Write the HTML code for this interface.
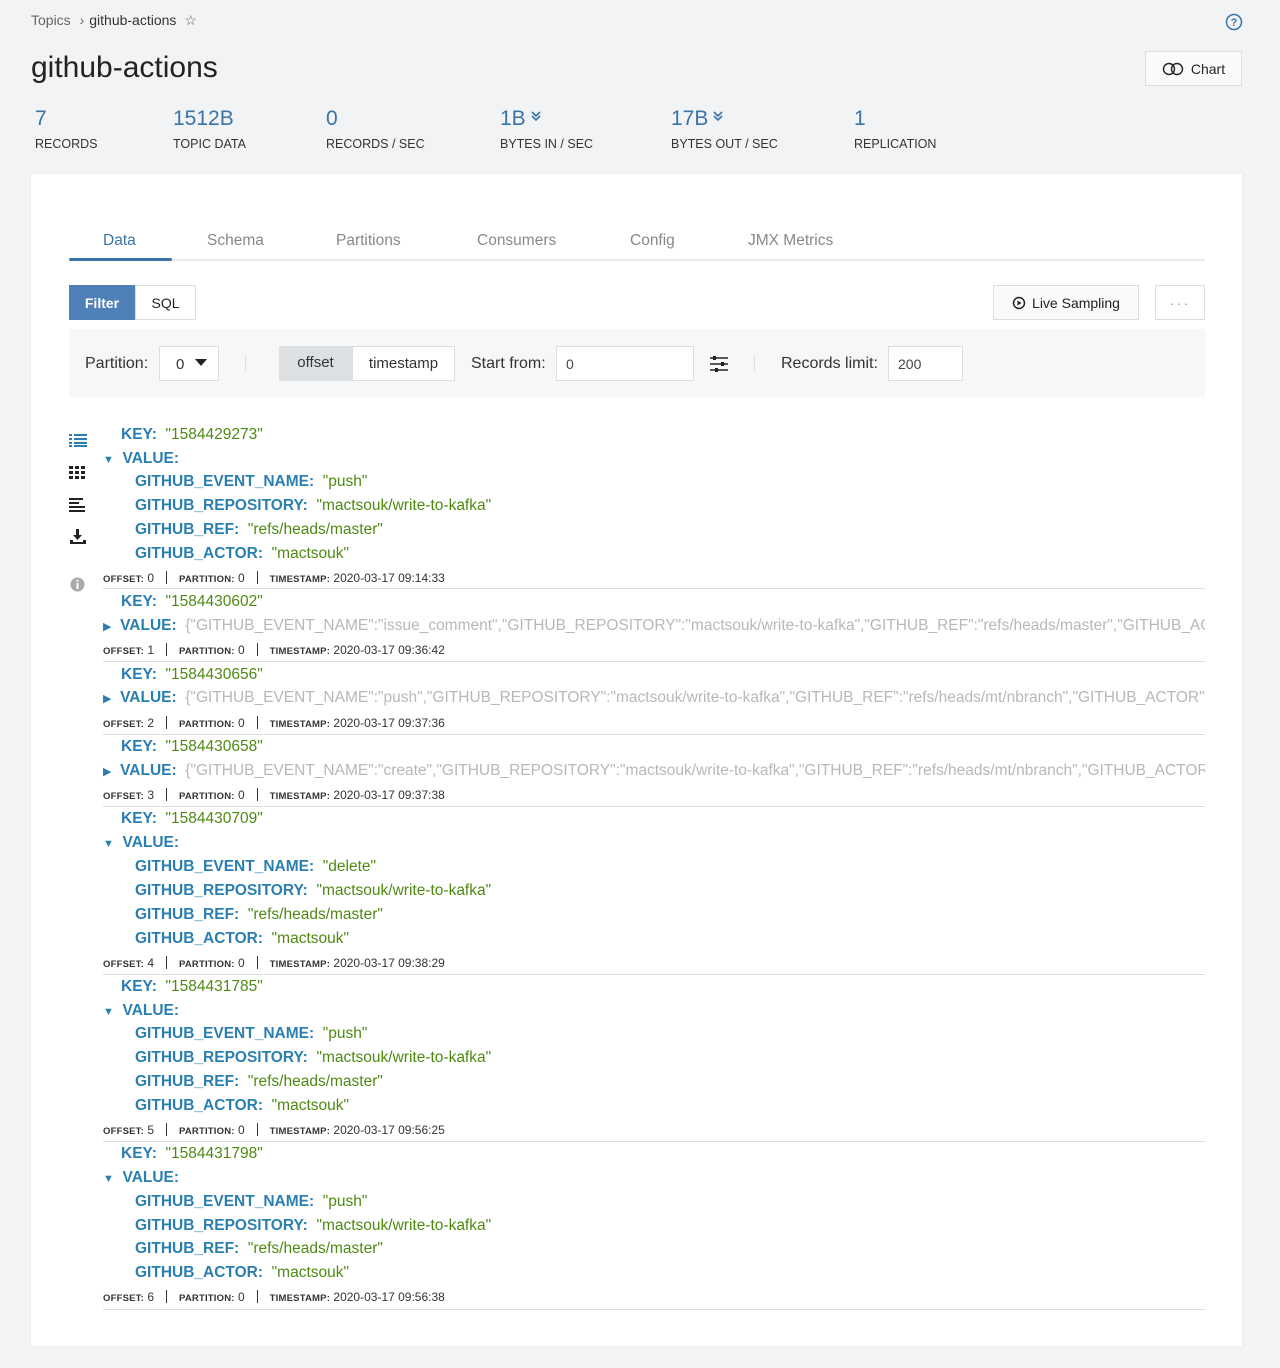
<!DOCTYPE html>
<html><head><meta charset="utf-8"><style>
*{margin:0;padding:0;box-sizing:border-box}
body{width:1280px;height:1368px;background:#f2f3f5;font-family:"Liberation Sans",sans-serif;position:relative;overflow:hidden;color:#222}
.a{position:absolute;white-space:nowrap}
.card{position:absolute;left:31px;top:174px;width:1211px;height:1172px;background:#fff;box-shadow:0 0 2px rgba(0,0,0,.08)}
.stat .n{font-size:21px;color:#3a73a8}
.stat .t{font-size:12.5px;color:#333;margin-top:6px}
.tab{font-size:15.5px;color:#888;top:232px}
.l{position:absolute;white-space:nowrap;font-size:15.5px;line-height:22px;height:22px}
.k{color:#2a7fb0;font-weight:bold}
.v{color:#4e8a12}
.g{color:#b8b8b8}
.m{position:absolute;font-size:12px;color:#333;white-space:nowrap;line-height:14px}
.m b{font-size:9.5px;font-weight:bold;letter-spacing:.2px}
.m i{font-style:normal;display:inline-block;width:1px;height:13px;background:#333;vertical-align:-2px;margin:0 12px}
.hr{position:absolute;left:103px;width:1102px;height:1px;background:#ddd}
.arr{color:#2a7fb0;font-size:11px}
.btn{position:absolute;border:1px solid #ddd;background:#fafafa;font-size:14px;color:#222;display:flex;align-items:center;justify-content:center}
.chev{display:inline-block;vertical-align:3px;margin-left:4px}
</style></head><body>
<div class="a" style="left:31px;top:12px;font-size:14px;color:#666">Topics <span style="margin:0 5px">›</span><span style="color:#333">github-actions</span> <span style="font-size:14px;margin-left:4px">☆</span></div>
<svg class="a" style="left:1225px;top:13px" width="18" height="18" viewBox="0 0 18 18"><circle cx="9" cy="9" r="7.5" fill="none" stroke="#3a73a8" stroke-width="1.5"/><text x="9" y="13" text-anchor="middle" font-size="11" font-weight="bold" fill="#3a73a8" font-family="Liberation Sans">?</text></svg>
<div class="a" style="left:31px;top:51px;font-size:30px;color:#222">github-actions</div>
<div class="btn" style="left:1145px;top:51px;width:97px;height:35px;"><svg width="24" height="14" viewBox="0 0 24 14" style="margin-right:5px"><circle cx="7" cy="7" r="5.5" fill="none" stroke="#222" stroke-width="1.4"/><circle cx="15" cy="7" r="5.5" fill="none" stroke="#222" stroke-width="1.4"/></svg>Chart</div>

<div class="a stat" style="left:35px;top:107px"><div class="n">7</div><div class="t">RECORDS</div></div>
<div class="a stat" style="left:173px;top:107px"><div class="n">1512B</div><div class="t">TOPIC DATA</div></div>
<div class="a stat" style="left:326px;top:107px"><div class="n">0</div><div class="t">RECORDS / SEC</div></div>
<div class="a stat" style="left:500px;top:107px"><div class="n">1B<svg class="chev" width="12" height="12" viewBox="0 0 12 12"><path d="M2 2l4 4 4-4M2 6l4 4 4-4" fill="none" stroke="#3a73a8" stroke-width="1.6"/></svg></div><div class="t">BYTES IN / SEC</div></div>
<div class="a stat" style="left:671px;top:107px"><div class="n">17B<svg class="chev" width="12" height="12" viewBox="0 0 12 12"><path d="M2 2l4 4 4-4M2 6l4 4 4-4" fill="none" stroke="#3a73a8" stroke-width="1.6"/></svg></div><div class="t">BYTES OUT / SEC</div></div>
<div class="a stat" style="left:854px;top:107px"><div class="n">1</div><div class="t">REPLICATION</div></div>

<div class="card"></div>
<div class="a tab" style="left:103px;color:#3a73a8">Data</div>
<div class="a tab" style="left:207px">Schema</div>
<div class="a tab" style="left:336px">Partitions</div>
<div class="a tab" style="left:477px">Consumers</div>
<div class="a tab" style="left:630px">Config</div>
<div class="a tab" style="left:748px">JMX Metrics</div>
<div class="a" style="left:69px;top:259px;width:1136px;height:2px;background:#eaeaea"></div>
<div class="a" style="left:69px;top:258px;width:103px;height:3px;background:#3a73a8;border-radius:2px"></div>

<div class="btn" style="left:69px;top:285px;width:66px;height:35px;background:#4f81b8;border-color:#4f81b8;color:#fff;font-weight:bold">Filter</div>
<div class="btn" style="left:135px;top:285px;width:61px;height:35px;background:#fff">SQL</div>
<div class="btn" style="left:993px;top:285px;width:146px;height:35px"><svg width="14" height="14" viewBox="0 0 14 14" style="margin-right:6px"><circle cx="7" cy="7" r="5.5" fill="none" stroke="#222" stroke-width="1.5"/><path d="M5.5 4.5L9.5 7 5.5 9.5z" fill="#222"/></svg>Live Sampling</div>
<div class="btn" style="left:1155px;top:285px;width:50px;height:35px;background:#fff;color:#999;letter-spacing:2px">···</div>

<div class="a" style="left:69px;top:329px;width:1136px;height:68px;background:#f7f7f7"></div>
<div class="a" style="left:85px;top:355px;font-size:16px;color:#333">Partition:</div>
<div class="a" style="left:159px;top:346px;width:60px;height:35px;background:#fff;border:1px solid #ddd;font-size:15px;padding:9px 0 0 16px;color:#333">0 <svg width="12" height="8" viewBox="0 0 12 8" style="margin-left:6px;vertical-align:2px"><path d="M0 0h12L6 7z" fill="#222"/></svg></div>
<div class="a" style="left:245px;top:355px;width:1px;height:16px;background:#ddd"></div>
<div class="a" style="left:279px;top:346px;width:73px;height:35px;background:#dde0e3;font-size:15px;color:#333;text-align:center;line-height:33px">offset</div>
<div class="a" style="left:352px;top:346px;width:103px;height:35px;background:#fff;border:1px solid #ddd;font-size:15px;color:#333;text-align:center;line-height:33px">timestamp</div>
<div class="a" style="left:471px;top:355px;font-size:16px;color:#333">Start from:</div>
<div class="a" style="left:556px;top:346px;width:138px;height:35px;background:#fff;border:1px solid #ddd;font-size:14px;color:#444;padding:9px 0 0 9px">0</div>
<svg class="a" style="left:709px;top:355px" width="20" height="18" viewBox="0 0 20 18"><g stroke="#222" stroke-width="1.5"><path d="M1 3h18M1 9h18M1 15h18"/></g><rect x="4" y="1" width="3" height="4" fill="#222"/><rect x="12" y="7" width="3" height="4" fill="#222"/><rect x="6" y="13" width="3" height="4" fill="#222"/></svg>
<div class="a" style="left:754px;top:355px;width:1px;height:16px;background:#ddd"></div>
<div class="a" style="left:781px;top:355px;font-size:16px;color:#333">Records limit:</div>
<div class="a" style="left:888px;top:346px;width:75px;height:35px;background:#fff;border:1px solid #ddd;font-size:14px;color:#444;padding:9px 0 0 9px">200</div>

<svg class="a" style="left:69px;top:433px" width="18" height="14" viewBox="0 0 18 14" fill="#2a7fb0"><rect x="0" y="1" width="3" height="2"/><rect x="5" y="1" width="13" height="2"/><rect x="0" y="5" width="3" height="2"/><rect x="5" y="5" width="13" height="2"/><rect x="0" y="9" width="3" height="2"/><rect x="5" y="9" width="13" height="2"/><rect x="0" y="12" width="3" height="2"/><rect x="5" y="12" width="13" height="2"/></svg>
<svg class="a" style="left:69px;top:466px" width="18" height="14" viewBox="0 0 18 14" fill="#222"><rect x="0" y="0" width="4" height="3"/><rect x="6" y="0" width="4" height="3"/><rect x="12" y="0" width="4" height="3"/><rect x="0" y="5" width="4" height="3"/><rect x="6" y="5" width="4" height="3"/><rect x="12" y="5" width="4" height="3"/><rect x="0" y="10" width="4" height="3"/><rect x="6" y="10" width="4" height="3"/><rect x="12" y="10" width="4" height="3"/></svg>
<svg class="a" style="left:69px;top:498px" width="18" height="14" viewBox="0 0 18 14" fill="#222"><rect x="0" y="0" width="14" height="2"/><rect x="0" y="4" width="10" height="2"/><rect x="0" y="8" width="16" height="2"/><rect x="0" y="12" width="16" height="2"/></svg>
<svg class="a" style="left:69px;top:529px" width="18" height="16" viewBox="0 0 18 16" fill="#222"><path d="M7 0h3v6h3l-4.5 5L4 6h3z"/><path d="M1 11h3v2h10v-2h3v4H1z"/></svg>
<svg class="a" style="left:70px;top:577px" width="15" height="15" viewBox="0 0 15 15"><circle cx="7.5" cy="7.5" r="7" fill="#aaa"/><rect x="6.5" y="6" width="2" height="6" fill="#fff"/><circle cx="7.5" cy="3.8" r="1.1" fill="#fff"/></svg>

<div class="l" style="left:121px;top:424px"><span class="k">KEY:</span>&nbsp; <span class="v">"1584429273"</span></div>
<div class="l" style="left:103px;top:448px"><span class="arr">▼</span>&nbsp; <span class="k">VALUE:</span></div>
<div class="l" style="left:135px;top:471px"><span class="k">GITHUB_EVENT_NAME:</span>&nbsp; <span class="v">"push"</span></div>
<div class="l" style="left:135px;top:495px"><span class="k">GITHUB_REPOSITORY:</span>&nbsp; <span class="v">"mactsouk/write-to-kafka"</span></div>
<div class="l" style="left:135px;top:519px"><span class="k">GITHUB_REF:</span>&nbsp; <span class="v">"refs/heads/master"</span></div>
<div class="l" style="left:135px;top:543px"><span class="k">GITHUB_ACTOR:</span>&nbsp; <span class="v">"mactsouk"</span></div>
<div class="m" style="left:103px;top:571px"><b>OFFSET:</b> 0<i></i><b>PARTITION:</b> 0<i></i><b>TIMESTAMP:</b> 2020-03-17 09:14:33</div>
<div class="hr" style="top:588px"></div>

<div class="l" style="left:121px;top:591px"><span class="k">KEY:</span>&nbsp; <span class="v">"1584430602"</span></div>
<div class="l" style="left:103px;top:615px;width:1102px;overflow:hidden"><span class="arr">▶</span>&nbsp; <span class="k">VALUE:</span>&nbsp; <span class="g">{"GITHUB_EVENT_NAME":"issue_comment","GITHUB_REPOSITORY":"mactsouk/write-to-kafka","GITHUB_REF":"refs/heads/master","GITHUB_ACTOR":"mactsouk"}</span></div>
<div class="m" style="left:103px;top:643px"><b>OFFSET:</b> 1<i></i><b>PARTITION:</b> 0<i></i><b>TIMESTAMP:</b> 2020-03-17 09:36:42</div>
<div class="hr" style="top:661px"></div>

<div class="l" style="left:121px;top:664px"><span class="k">KEY:</span>&nbsp; <span class="v">"1584430656"</span></div>
<div class="l" style="left:103px;top:687px;width:1102px;overflow:hidden"><span class="arr">▶</span>&nbsp; <span class="k">VALUE:</span>&nbsp; <span class="g">{"GITHUB_EVENT_NAME":"push","GITHUB_REPOSITORY":"mactsouk/write-to-kafka","GITHUB_REF":"refs/heads/mt/nbranch","GITHUB_ACTOR":"mactsouk"}</span></div>
<div class="m" style="left:103px;top:716px"><b>OFFSET:</b> 2<i></i><b>PARTITION:</b> 0<i></i><b>TIMESTAMP:</b> 2020-03-17 09:37:36</div>
<div class="hr" style="top:734px"></div>

<div class="l" style="left:121px;top:736px"><span class="k">KEY:</span>&nbsp; <span class="v">"1584430658"</span></div>
<div class="l" style="left:103px;top:760px;width:1102px;overflow:hidden"><span class="arr">▶</span>&nbsp; <span class="k">VALUE:</span>&nbsp; <span class="g">{"GITHUB_EVENT_NAME":"create","GITHUB_REPOSITORY":"mactsouk/write-to-kafka","GITHUB_REF":"refs/heads/mt/nbranch","GITHUB_ACTOR":"mactsouk"}</span></div>
<div class="m" style="left:103px;top:788px"><b>OFFSET:</b> 3<i></i><b>PARTITION:</b> 0<i></i><b>TIMESTAMP:</b> 2020-03-17 09:37:38</div>
<div class="hr" style="top:806px"></div>

<div class="l" style="left:121px;top:808px"><span class="k">KEY:</span>&nbsp; <span class="v">"1584430709"</span></div>
<div class="l" style="left:103px;top:832px"><span class="arr">▼</span>&nbsp; <span class="k">VALUE:</span></div>
<div class="l" style="left:135px;top:856px"><span class="k">GITHUB_EVENT_NAME:</span>&nbsp; <span class="v">"delete"</span></div>
<div class="l" style="left:135px;top:880px"><span class="k">GITHUB_REPOSITORY:</span>&nbsp; <span class="v">"mactsouk/write-to-kafka"</span></div>
<div class="l" style="left:135px;top:904px"><span class="k">GITHUB_REF:</span>&nbsp; <span class="v">"refs/heads/master"</span></div>
<div class="l" style="left:135px;top:928px"><span class="k">GITHUB_ACTOR:</span>&nbsp; <span class="v">"mactsouk"</span></div>
<div class="m" style="left:103px;top:956px"><b>OFFSET:</b> 4<i></i><b>PARTITION:</b> 0<i></i><b>TIMESTAMP:</b> 2020-03-17 09:38:29</div>
<div class="hr" style="top:974px"></div>

<div class="l" style="left:121px;top:976px"><span class="k">KEY:</span>&nbsp; <span class="v">"1584431785"</span></div>
<div class="l" style="left:103px;top:1000px"><span class="arr">▼</span>&nbsp; <span class="k">VALUE:</span></div>
<div class="l" style="left:135px;top:1023px"><span class="k">GITHUB_EVENT_NAME:</span>&nbsp; <span class="v">"push"</span></div>
<div class="l" style="left:135px;top:1047px"><span class="k">GITHUB_REPOSITORY:</span>&nbsp; <span class="v">"mactsouk/write-to-kafka"</span></div>
<div class="l" style="left:135px;top:1071px"><span class="k">GITHUB_REF:</span>&nbsp; <span class="v">"refs/heads/master"</span></div>
<div class="l" style="left:135px;top:1095px"><span class="k">GITHUB_ACTOR:</span>&nbsp; <span class="v">"mactsouk"</span></div>
<div class="m" style="left:103px;top:1123px"><b>OFFSET:</b> 5<i></i><b>PARTITION:</b> 0<i></i><b>TIMESTAMP:</b> 2020-03-17 09:56:25</div>
<div class="hr" style="top:1141px"></div>

<div class="l" style="left:121px;top:1143px"><span class="k">KEY:</span>&nbsp; <span class="v">"1584431798"</span></div>
<div class="l" style="left:103px;top:1167px"><span class="arr">▼</span>&nbsp; <span class="k">VALUE:</span></div>
<div class="l" style="left:135px;top:1191px"><span class="k">GITHUB_EVENT_NAME:</span>&nbsp; <span class="v">"push"</span></div>
<div class="l" style="left:135px;top:1215px"><span class="k">GITHUB_REPOSITORY:</span>&nbsp; <span class="v">"mactsouk/write-to-kafka"</span></div>
<div class="l" style="left:135px;top:1238px"><span class="k">GITHUB_REF:</span>&nbsp; <span class="v">"refs/heads/master"</span></div>
<div class="l" style="left:135px;top:1262px"><span class="k">GITHUB_ACTOR:</span>&nbsp; <span class="v">"mactsouk"</span></div>
<div class="m" style="left:103px;top:1290px"><b>OFFSET:</b> 6<i></i><b>PARTITION:</b> 0<i></i><b>TIMESTAMP:</b> 2020-03-17 09:56:38</div>
<div class="hr" style="top:1309px"></div>
</body></html>
